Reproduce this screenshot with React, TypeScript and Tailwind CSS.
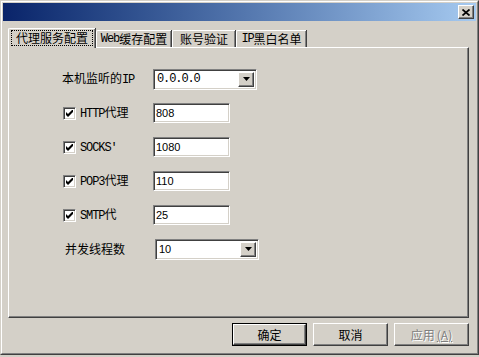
import React from "react";

const cjk = "font-['SimSun','Noto_Sans_CJK_SC',sans-serif] text-[12px] leading-none text-black";
const mono = "font-['Liberation_Mono',monospace] text-[12px] tracking-[-1.1px]";
const sunken =
    "border border-t-[#808080] border-l-[#808080] border-r-white border-b-white shadow-[inset_1px_1px_0_#404040,inset_-1px_-1px_0_#d4d0c8]";
const raised =
    "border border-t-white border-l-white border-r-[#404040] border-b-[#404040] shadow-[inset_-1px_-1px_0_#808080]";

function Latin({ children }: { children: React.ReactNode }) {
    return <span className={mono}>{children}</span>;
}

function CheckBox() {
    return (
        <span className={`w-[13px] h-[13px] bg-white flex items-center justify-center ${sunken}`}>
            <svg width="7" height="7" viewBox="0 0 7 7">
                <path d="M0 2 L2 4 L7 -1 L7 2 L2 7 L0 5 Z" fill="#000" />
            </svg>
        </span>
    );
}

function TextBox({ value }: { value: string }) {
    return (
        <div className={`w-[77px] h-[20px] bg-white flex items-center pl-[2px] ${sunken}`}>
            <span className="font-['Liberation_Sans',sans-serif] text-[11px] text-black">{value}</span>
        </div>
    );
}

function Combo({ value, mono: isMono }: { value: string; mono?: boolean }) {
    return (
        <div className={`w-[104px] h-[21px] bg-white flex items-center p-[2px] ${sunken}`}>
            <span
                className={`flex-1 pl-[1px] text-black ${
                    isMono ? mono : "font-['Liberation_Sans',sans-serif] text-[11px]"
                }`}
            >
                {value}
            </span>
            <span className={`w-[16px] h-full bg-[#d4d0c8] flex items-center justify-center ${raised}`}>
                <svg width="7" height="4" viewBox="0 0 7 4">
                    <path d="M0 0 H7 L3.5 4 Z" fill="#000" />
                </svg>
            </span>
        </div>
    );
}

function Button({ label, primary, disabled }: { label: React.ReactNode; primary?: boolean; disabled?: boolean }) {
    const inner = (
        <div
            className={`w-full h-full flex items-center justify-center bg-[#d4d0c8] ${raised} ${
                disabled ? "text-[#808080] [text-shadow:1px_1px_0_#fff]" : ""
            }`}
        >
            {label}
        </div>
    );
    return primary ? (
        <div className={`w-[75px] h-[23px] border border-black ${cjk}`}>{inner}</div>
    ) : (
        <div className={`w-[75px] h-[23px] ${cjk}`}>{inner}</div>
    );
}

export default function App() {
    const tabs = [
        { w: "w-[75px]", label: <><Latin>Web</Latin>缓存配置</> },
        { w: "w-[63px]", label: "账号验证" },
        { w: "w-[70px]", label: <><Latin>IP</Latin>黑白名单</> },
    ];

    return (
        <div className="w-[479px] h-[357px] bg-[#d4d0c8]">
            <div className="h-[355px] border border-t-[#d4d0c8] border-l-[#d4d0c8] border-r-[#404040] border-b-[#404040]">
                <div className="h-full border border-t-white border-l-white border-r-[#808080] border-b-[#808080] p-px flex flex-col">
                    {/* title bar */}
                    <div className="h-[18px] bg-linear-to-r from-[#0a246a] to-[#a6caf0] flex items-center justify-end pr-[2px]">
                        <div className={`w-[16px] h-[14px] bg-[#d4d0c8] flex items-center justify-center ${raised}`}>
                            <svg width="8" height="7" viewBox="0 0 8 7">
                                <path d="M0.5 0.5 L7.5 6.5 M7.5 0.5 L0.5 6.5" stroke="#000" strokeWidth="1.7" />
                            </svg>
                        </div>
                    </div>

                    <div className="pl-[5px] pt-[7px]">
                        {/* tabs */}
                        <div className="flex items-end h-[19px]">
                            <div className="relative z-10 w-[87px] h-[20px] -mb-px bg-[#d4d0c8] border-t border-l border-white rounded-tl-[2px] shadow-[inset_-1px_0_0_#808080,1px_0_0_#404040] flex items-start justify-center pt-[1px]">
                                <span className={`border border-dotted border-black px-[4px] h-[16px] flex items-center ${cjk}`}>
                                    代理服务配置
                                </span>
                            </div>
                            {tabs.map((t, i) => (
                                <div
                                    key={i}
                                    className={`${t.w} h-[17px] ml-px border-t border-l border-white rounded-tl-[2px] shadow-[inset_-1px_0_0_#808080,1px_0_0_#404040] flex items-center justify-center ${cjk}`}
                                >
                                    {t.label}
                                </div>
                            ))}
                        </div>

                        {/* panel */}
                        <div className="w-[461px] h-[271px] border border-t-white border-l-white border-r-[#404040] border-b-[#404040] shadow-[inset_-1px_-1px_0_#808080] pt-[21px] pl-[53px]">
                            <div className="flex flex-col gap-[14px]">
                                <div className="flex items-center h-[20px]">
                                    <span className={`w-[91px] ${cjk}`}>
                                        本机监听的<Latin>IP</Latin>
                                    </span>
                                    <Combo value="0.0.0.0" mono />
                                </div>
                                {[
                                    { l: <><Latin>HTTP</Latin>代理</>, v: "808" },
                                    { l: <Latin>SOCKS'</Latin>, v: "1080" },
                                    { l: <><Latin>POP3</Latin>代理</>, v: "110" },
                                    { l: <><Latin>SMTP</Latin>代</>, v: "25" },
                                ].map((r, i) => (
                                    <div key={i} className="flex items-center h-[20px]">
                                        <div className="w-[91px] flex items-center gap-[4px] pl-px">
                                            <CheckBox />
                                            <span className={cjk}>{r.l}</span>
                                        </div>
                                        <TextBox value={r.v} />
                                    </div>
                                ))}
                                <div className="flex items-center h-[20px] pl-[2px]">
                                    <span className={`w-[91px] pl-px ${cjk}`}>并发线程数</span>
                                    <Combo value="10" />
                                </div>
                            </div>
                        </div>

                        {/* buttons */}
                        <div className="w-[461px] mt-[5px] flex justify-end gap-[6px]">
                            <Button label="确定" primary />
                            <Button label="取消" />
                            <Button
                                disabled
                                label={
                                    <>
                                        应用<span className="ml-[2px] underline">(A)</span>
                                    </>
                                }
                            />
                        </div>
                    </div>
                </div>
            </div>
        </div>
    );
}
